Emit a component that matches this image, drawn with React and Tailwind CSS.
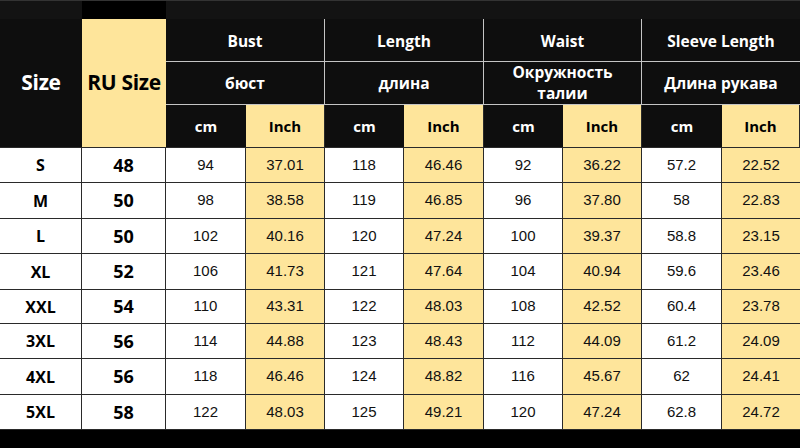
import React from "react";

const cols = "grid grid-cols-[82px_84px_80px_79px_79px_80px_79px_79px_80px_78px]";
const Y = "bg-[#fee59b]";
const H = "bg-[#0e0e0e]";

const rows = [
  ["S", "48", "94", "37.01", "118", "46.46", "92", "36.22", "57.2", "22.52"],
  ["M", "50", "98", "38.58", "119", "46.85", "96", "37.80", "58", "22.83"],
  ["L", "50", "102", "40.16", "120", "47.24", "100", "39.37", "58.8", "23.15"],
  ["XL", "52", "106", "41.73", "121", "47.64", "104", "40.94", "59.6", "23.46"],
  ["XXL", "54", "110", "43.31", "122", "48.03", "108", "42.52", "60.4", "23.78"],
  ["3XL", "56", "114", "44.88", "123", "48.43", "112", "44.09", "61.2", "24.09"],
  ["4XL", "56", "118", "46.46", "124", "48.82", "116", "45.67", "62", "24.41"],
  ["5XL", "58", "122", "48.03", "125", "49.21", "120", "47.24", "62.8", "24.72"],
];
const heights = ["h-[35px]", "h-[36px]", "h-[35px]", "h-[36px]", "h-[34px]", "h-[35px]", "h-[36px]", "h-[35px]"];

const groups = [
  ["Bust", "бюст", 3],
  ["Length", "длина", 5],
  ["Waist", "Окружность талии", 7],
  ["Sleeve Length", "Длина рукава", 9],
];
const startCls = { 3: "col-start-3", 5: "col-start-5", 7: "col-start-7", 9: "col-start-9" };

export default function App() {
  return (
    <div className="w-[800px] h-[448px] overflow-hidden bg-white font-['Open_Sans',sans-serif]">
      {/* top band */}
      <div className="flex h-[19px] border-t border-[#333]">
        <div className="w-[82px] bg-[#131313]" />
        <div className="w-[84px] bg-black" />
        <div className="flex-1 bg-[#131313]" />
      </div>
      {/* header */}
      <div className={`${cols} grid-rows-[43px_43px_42px] ${H} text-white font-bold`}>
        <div className="row-span-3 col-start-1 row-start-1 flex items-center justify-center text-[21px] tracking-[-0.3px]">Size</div>
        <div className={`row-span-3 col-start-2 row-start-1 flex items-center justify-center text-[21px] tracking-[-0.3px] text-black ${Y}`}>RU Size</div>
        {groups.map(([en, ru, c], i) => (
          <React.Fragment key={en}>
            <div className={`${startCls[c]} col-span-2 row-start-1 flex items-center justify-center pt-[3px] text-[15.5px] border-b border-[#c4c4c4] ${i < 3 ? "border-r" : ""}`}>{en}</div>
            <div className={`${startCls[c]} col-span-2 row-start-2 flex items-center justify-center text-center text-[15.5px] leading-[21px] border-b border-[#c4c4c4] ${i < 3 ? "border-r" : ""}`}>
              {ru === "Окружность талии" ? (<span>Окружность<br />талии</span>) : ru}
            </div>
            <div className={`${startCls[c]} row-start-3 flex items-center justify-center text-[15px]`}>cm</div>
            <div className={`row-start-3 flex items-center justify-center text-[15px] text-black ${Y} border-r border-[#2a2a2a]`}>Inch</div>
          </React.Fragment>
        ))}
      </div>
      {/* body */}
      <div className="border-t border-[#2a2a2a]">
        {rows.map((r, ri) => (
          <div key={ri} className={`${cols} ${heights[ri]} border-b border-[#2a2a2a]`}>
            {r.map((v, ci) => {
              const yellow = ci >= 3 && ci % 2 === 1;
              const bold = ci < 2;
              return (
                <div
                  key={ci}
                  className={`flex items-center justify-center border-r border-[#2a2a2a] last:border-r-0 ${yellow ? Y : "bg-white"} ${
                    bold
                      ? `font-bold text-black ${ci === 0 ? "text-[16px]" : "text-[18px]"}`
                      : "font-['Liberation_Sans',sans-serif] text-[15px] text-[#111]"
                  }`}
                >
                  {v}
                </div>
              );
            })}
          </div>
        ))}
      </div>
      <div className="h-[19px] bg-black" />
    </div>
  );
}
